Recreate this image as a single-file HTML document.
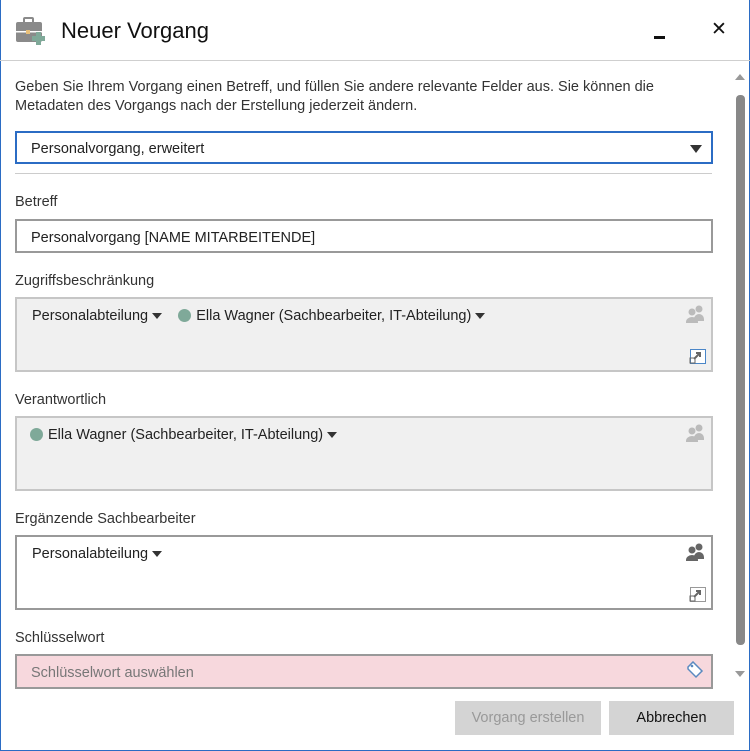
<!DOCTYPE html>
<html><head><meta charset="utf-8"><style>
*{box-sizing:border-box;margin:0;padding:0}
body{width:750px;height:751px;background:#fff;font-family:"Liberation Sans",sans-serif;font-size:14.5px;color:#222;position:relative;overflow:hidden}
.win{position:absolute;left:0;top:0;width:750px;height:751px;border:1px solid #2b6cc4;border-top:none}
.abs{position:absolute}
.lbl{position:absolute;left:15px;color:#333;font-size:14.5px}
.box{position:absolute;left:15px;width:698px;border:2px solid #999;white-space:nowrap}
.gray{background:#f0f0f0;border-color:#c6c6c6}
.tri{display:inline-block;width:0;height:0;border-left:5px solid transparent;border-right:5px solid transparent;border-top:6px solid #333;vertical-align:middle;margin-left:4px}
.dot{display:inline-block;width:13px;height:13px;border-radius:50%;background:#7fa999;vertical-align:-2px;margin-right:5px}
.btn{position:absolute;top:701px;height:34px;background:#d4d4d4;text-align:center;line-height:35px;font-size:14.5px}
</style></head><body>
<div class="win"></div>
<div class="abs" style="left:0;top:60px;width:750px;height:1px;background:#cfcfcf"></div>
<svg class="abs" style="left:16px;top:17px" width="30" height="30" viewBox="0 0 30 30">
<rect x="0" y="5" width="26" height="20" rx="2" fill="#8a8a8a"/>
<rect x="8" y="1" width="9" height="6" rx="1" fill="none" stroke="#8a8a8a" stroke-width="2"/>
<rect x="0" y="14" width="26" height="1.5" fill="#fff"/>
<rect x="10" y="13" width="4" height="4" fill="#e8c07a"/>
<path d="M20 15h5v4h4v5h-4v4h-5v-4h-4v-5h4z" fill="#7fa999"/>
</svg>
<div class="abs" style="left:61px;top:18px;font-size:22px;color:#111">Neuer Vorgang</div>
<div class="abs" style="left:654px;top:36px;width:11px;height:3px;background:#111"></div>
<div class="abs" style="left:711px;top:18px;font-size:19px;color:#111">✕</div>
<div class="abs" style="left:15px;top:78px;line-height:19px;color:#333;width:665px">Geben Sie Ihrem Vorgang einen Betreff, und füllen Sie andere relevante Felder aus. Sie können die Metadaten des Vorgangs nach der Erstellung jederzeit ändern.</div>
<div class="box" style="top:131px;height:33px;border-color:#2b6cc4;padding:8px 0 0 14px">Personalvorgang, erweitert<span class="abs" style="right:9px;top:12px;border-left:6px solid transparent;border-right:6px solid transparent;border-top:8px solid #333"></span></div>
<div class="abs" style="left:15px;top:173px;width:697px;height:1px;background:#ccc"></div>
<div class="lbl" style="top:194px">Betreff</div>
<div class="box" style="top:219px;height:34px;padding:9px 0 0 14px">Personalvorgang [NAME MITARBEITENDE]</div>
<div class="lbl" style="top:273px">Zugriffsbeschränkung</div>
<div class="box gray" style="top:297px;height:75px;padding:9px 0 0 15px">Personalabteilung<span class="tri"></span>&nbsp;&nbsp;&nbsp;&nbsp;<span class="dot"></span>Ella Wagner (Sachbearbeiter, IT-Abteilung)<span class="tri"></span></div>
<div class="lbl" style="top:392px">Verantwortlich</div>
<div class="box gray" style="top:416px;height:75px;padding:9px 0 0 13px"><span class="dot"></span>Ella Wagner (Sachbearbeiter, IT-Abteilung)<span class="tri"></span></div>
<div class="lbl" style="top:511px">Ergänzende Sachbearbeiter</div>
<div class="box" style="top:535px;height:75px;padding:9px 0 0 15px">Personalabteilung<span class="tri"></span></div>
<div class="lbl" style="top:630px">Schlüsselwort</div>
<div class="box" style="top:654px;height:35px;background:#f7d8dd;padding:9px 0 0 14px;color:#777">Schlüsselwort auswählen</div>
<svg class="abs" style="left:686px;top:305px" width="20" height="18"><circle cx="13" cy="4" r="3.5" fill="#bbb"/><path d="M8 14a5 5 0 0 1 10 0v2H8z" fill="#bbb"/><circle cx="6" cy="7" r="3.5" fill="#bbb"/><path d="M0 17a6 5 0 0 1 12 0v1H0z" fill="#bbb"/></svg>
<svg class="abs" style="left:686px;top:424px" width="20" height="18"><circle cx="13" cy="4" r="3.5" fill="#bbb"/><path d="M8 14a5 5 0 0 1 10 0v2H8z" fill="#bbb"/><circle cx="6" cy="7" r="3.5" fill="#bbb"/><path d="M0 17a6 5 0 0 1 12 0v1H0z" fill="#bbb"/></svg>
<svg class="abs" style="left:686px;top:543px" width="20" height="18"><circle cx="13" cy="4" r="3.5" fill="#666"/><path d="M8 14a5 5 0 0 1 10 0v2H8z" fill="#666"/><circle cx="6" cy="7" r="3.5" fill="#666"/><path d="M0 17a6 5 0 0 1 12 0v1H0z" fill="#666"/></svg>
<svg class="abs" style="left:689px;top:349px" width="17" height="16"><rect x="1.5" y="0.5" width="15" height="14" fill="#fff" stroke="#4a86c8"/><rect x="1" y="9" width="5" height="5" fill="none" stroke="#666"/><path d="M5 10l6-6M7 4h4v4" stroke="#666" stroke-width="2" fill="none"/></svg>
<svg class="abs" style="left:689px;top:587px" width="17" height="16"><rect x="1.5" y="0.5" width="15" height="14" fill="#fff" stroke="#999"/><rect x="1" y="9" width="5" height="5" fill="none" stroke="#666"/><path d="M5 10l6-6M7 4h4v4" stroke="#666" stroke-width="2" fill="none"/></svg>
<svg class="abs" style="left:686px;top:661px" width="18" height="18"><path d="M2 6l5-5 9 9-6 6-8-8z" fill="#fff" stroke="#5b8ac0" stroke-width="1.5"/><circle cx="6" cy="5" r="1.3" fill="#5b8ac0"/></svg>
<div class="abs" style="left:735px;top:74px;border-left:5px solid transparent;border-right:5px solid transparent;border-bottom:6px solid #999"></div>
<div class="abs" style="left:736px;top:95px;width:9px;height:550px;background:#888;border-radius:4px"></div>
<div class="abs" style="left:735px;top:671px;border-left:5px solid transparent;border-right:5px solid transparent;border-top:6px solid #999"></div>
<div class="btn" style="left:455px;width:146px;color:#999">Vorgang erstellen</div>
<div class="btn" style="left:609px;width:125px;color:#111">Abbrechen</div>
</body></html>
